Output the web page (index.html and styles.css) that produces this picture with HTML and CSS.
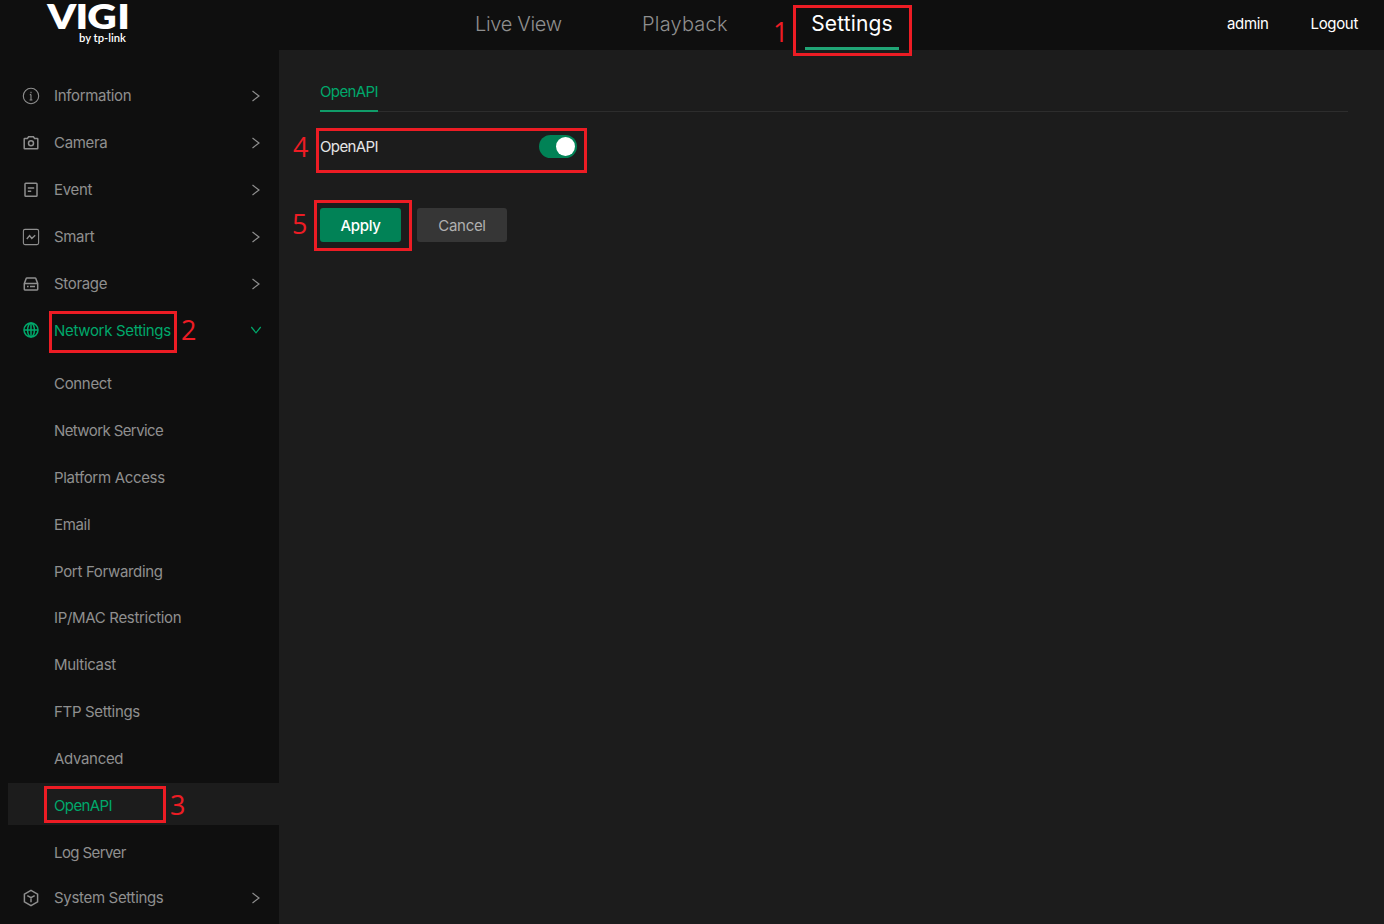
FILE: index.html
```html
<!DOCTYPE html>
<html lang="en">
<head>
  <meta charset="UTF-8" />
  <meta name="viewport" content="width=device-width, initial-scale=1.0"/>
  <title>VIGI - Settings</title>
  <link rel="stylesheet" href="styles.css">
</head>
<body>

  <header class="topbar">
    <svg class="logo" width="90" height="50" viewBox="0 0 90 50">
      <text class="logo-name" transform="scale(1.2 1)" x="5.2 28.8 38.5 63.6" y="29">VIGI</text>
      <text class="logo-by" x="38" y="41.5" textLength="47" lengthAdjust="spacingAndGlyphs">by tp-link</text>
    </svg>
    <nav class="tabs">
      <a class="tab live">Live View</a>
      <a class="tab playback">Playback</a>
      <a class="tab active">Settings</a>
    </nav>
    <div class="user">
      <a class="admin">admin</a>
      <a>Logout</a>
    </div>
  </header>

  <div class="layout">
    <aside class="sidebar">
      <ul class="menu">
        <li class="item">
          <svg class="icon" viewBox="0 0 18 18"><circle cx="9" cy="9" r="7.7"/><path d="M9 7.6v5.4M9 4.8v1.5M7.8 7.6H9M7.6 13h2.8"/></svg>
          <span>Information</span>
          <svg class="arrow" viewBox="0 0 10 12"><path d="M1.5 1l6.5 5-6.5 5"/></svg>
        </li>
        <li class="item">
          <svg class="icon bold" viewBox="0 0 18 18"><path d="M2.8 4.4h2.6l1.2-1.7h4.8l1.2 1.7h2.6q.6 0 .6.6v9.2q0 .6-.6.6H2.8q-.6 0-.6-.6V5q0-.6.6-.6z"/><circle cx="9" cy="9.3" r="2.5"/></svg>
          <span>Camera</span>
          <svg class="arrow" viewBox="0 0 10 12"><path d="M1.5 1l6.5 5-6.5 5"/></svg>
        </li>
        <li class="item">
          <svg class="icon bold" viewBox="0 0 18 18"><rect x="3" y="2.2" width="12" height="13" rx=".8"/><path d="M5.8 7h6.4M5.8 10.3h3.4"/></svg>
          <span>Event</span>
          <svg class="arrow" viewBox="0 0 10 12"><path d="M1.5 1l6.5 5-6.5 5"/></svg>
        </li>
        <li class="item">
          <svg class="icon" viewBox="0 0 18 18"><rect x="1.4" y="1.4" width="15.2" height="15.2" rx="1.6"/><path d="M4.8 11l2.8-3.4 2.2 2.8 3.4-3.2" stroke-width="1.4"/></svg>
          <span>Smart</span>
          <svg class="arrow" viewBox="0 0 10 12"><path d="M1.5 1l6.5 5-6.5 5"/></svg>
        </li>
        <li class="item">
          <svg class="icon bold" viewBox="0 0 18 18"><path d="M2.3 8.5l1.9-5.1q.2-.5.8-.5h8q.6 0 .8.5l1.9 5.1v5.8q0 .6-.6.6H2.9q-.6 0-.6-.6zM2.3 8.5h13.4M5 11.6h1.6M8 11.6h5"/></svg>
          <span>Storage</span>
          <svg class="arrow" viewBox="0 0 10 12"><path d="M1.5 1l6.5 5-6.5 5"/></svg>
        </li>
        <li class="item open">
          <svg class="icon bold" viewBox="0 0 18 18"><circle cx="9" cy="9" r="7"/><ellipse cx="9" cy="9" rx="3.4" ry="7"/><path d="M2 9h14M9 2v14"/></svg>
          <span>Network Settings</span>
          <svg class="arrow down" viewBox="0 0 12 8"><path d="M1.3 1L6 6.8 10.7 1"/></svg>
        </li>
      </ul>
      <ul class="submenu">
        <li>Connect</li>
        <li class="tight">Network Service</li>
        <li>Platform Access</li>
        <li>Email</li>
        <li>Port Forwarding</li>
        <li>IP/MAC Restriction</li>
        <li>Multicast</li>
        <li>FTP Settings</li>
        <li>Advanced</li>
        <li class="selected tight">OpenAPI</li>
        <li class="tight">Log Server</li>
      </ul>
      <ul class="menu">
        <li class="item">
          <svg class="icon bold" viewBox="0 0 18 18"><path d="M9 1.4l6.6 3.8v7.6L9 16.6l-6.6-3.8V5.2zM5.3 6.6L9 8.7l3.7-2.1M9 8.7v4.6"/></svg>
          <span>System Settings</span>
          <svg class="arrow" viewBox="0 0 10 12"><path d="M1.5 1l6.5 5-6.5 5"/></svg>
        </li>
      </ul>
    </aside>

    <main class="content">
      <div class="page-tabs"><a class="tight">OpenAPI</a></div>
      <div class="field">
        <label class="tight">OpenAPI</label>
        <span class="switch"></span>
      </div>
      <div class="buttons">
        <button class="apply">Apply</button>
        <button class="cancel">Cancel</button>
      </div>
    </main>
  </div>

  <!-- numbered steps over the page -->
  <div class="mark mark-1"><b>1</b></div>
  <div class="mark mark-2"><b>2</b></div>
  <div class="mark mark-3"><b>3</b></div>
  <div class="mark mark-4"><b>4</b></div>
  <div class="mark mark-5"><b>5</b></div>

</body>
</html>
```
FILE: styles.css
```css
* {
  box-sizing: border-box;
}
body {
  margin: 0;
  height: 924px;
  overflow: hidden;
  position: relative;
  background: #1c1c1c;
  font-family: Inter, "Liberation Sans", sans-serif;
  font-size: 15px;
  letter-spacing: -0.32px;
  color: #8f8f8f;
}
ul {
  list-style: none;
  margin: 0;
  padding: 0;
}
.tight {
  letter-spacing: -0.6px;
}

/* Header */
.topbar {
  display: flex;
  height: 50px;
  background: #0f0f0f;
}
.logo {
  margin-left: 41px;
  fill: #fff;
}
.logo-name {
  font-family: Lato, sans-serif;
  font-size: 34px;
  font-weight: 800;
  letter-spacing: 0;
}
.logo-by {
  font-family: Lato, sans-serif;
  font-size: 11px;
  font-weight: 600;
  letter-spacing: 0;
}
.tabs {
  display: flex;
  margin-left: 344px;
  font-size: 20px;
  font-weight: 300;
  line-height: 48px;
  white-space: nowrap;
}
.live {
  width: 167px;
}
.playback {
  width: 163px;
  letter-spacing: 0.2px;
}
.tab.active {
  width: 94px;
  height: 50px;
  line-height: 47px;
  text-align: center;
  font-size: 21px;
  letter-spacing: 0.15px;
  color: #fff;
  font-weight: 400;
  border-bottom: 3px solid #20a576;
}
.user {
  display: flex;
  justify-content: space-between;
  width: 131px;
  margin-left: auto;
  margin-right: 26px;
  line-height: 48px;
  color: #fff;
}

.layout {
  display: flex;
  height: 874px;
}

/* Sidebar */
.sidebar {
  width: 279px;
  padding-top: 25px;
  background: #0f0f0f;
}
.item {
  display: flex;
  align-items: center;
  height: 41.9px;
  margin-bottom: 5px;
  padding: 0 18px 0 22px;
}
.item span {
  flex: 1;
  margin-left: 14px;
}
.item.open {
  color: #00a86b;
}
svg.icon, svg.arrow {
  fill: none;
  stroke: currentColor;
  stroke-width: 1.1;
}
svg.icon {
  width: 18px;
  height: 18px;
}
svg.icon.bold {
  stroke-width: 1.5;
}
svg.arrow {
  width: 10px;
  height: 12px;
  stroke-width: 1.2;
}
svg.arrow.down {
  width: 12px;
  height: 8px;
  margin-right: -1px;
}
.submenu {
  padding: 4.6px 0 0 8px;
}
.submenu li {
  height: 41.9px;
  line-height: 46px;
  margin-bottom: 5px;
  padding-left: 46px;
}
.submenu li:last-child {
  margin-bottom: 5.2px;
}
.submenu .selected {
  background: #1c1c1c;
  color: #00a86b;
}

/* Content */
.content {
  flex: 1;
  padding: 25px 36px 0 41px;
}
.page-tabs {
  display: flex;
  height: 37px;
  border-bottom: 1px solid #2d2d2d;
  line-height: 34px;
  color: #00a86b;
}
.page-tabs a {
  height: 37px;
  border-bottom: 2px solid #109c69;
}
.field {
  display: flex;
  justify-content: space-between;
  align-items: center;
  width: 257px;
  margin-top: 23px;
  color: #e6e6e6;
}
.switch {
  width: 38px;
  height: 23px;
  border-radius: 12px;
  background: #018256;
}
.switch::after {
  content: "";
  display: block;
  width: 19px;
  height: 19px;
  margin: 2px 2px 2px 17px;
  border-radius: 50%;
  background: #fff;
}
.buttons {
  display: flex;
  gap: 16px;
  margin-top: 50px;
}
.buttons button {
  height: 34px;
  padding: 0;
  border: none;
  border-radius: 3px;
  font: inherit;
  letter-spacing: inherit;
}
.buttons .apply {
  width: 81px;
  background: #018256;
  color: #fff;
  font-weight: 500;
}
.buttons .cancel {
  width: 90px;
  background: #363636;
  color: #b0b0b0;
}

/* Step marks */
.mark {
  position: absolute;
  border: 3px solid #ed1c24;
}
.mark b {
  position: absolute;
  font: 400 27px/30px "Open Sans", sans-serif;
  letter-spacing: 0;
  color: #ed1c24;
}
.mark-1 { left: 793px; top: 5px; width: 119px; height: 51px; }
.mark-1 b { left: -23px; top: 9px; }
.mark-2 { left: 49px; top: 311px; width: 128px; height: 42px; }
.mark-2 b { left: 129px; top: 1px; }
.mark-3 { left: 44px; top: 786px; width: 122px; height: 37px; }
.mark-3 b { left: 123px; top: 1px; }
.mark-4 { left: 316px; top: 128px; width: 271px; height: 45px; }
.mark-4 b { left: -26px; top: 1px; }
.mark-5 { left: 314px; top: 200px; width: 98px; height: 51px; }
.mark-5 b { left: -25px; top: 6px; }
```
